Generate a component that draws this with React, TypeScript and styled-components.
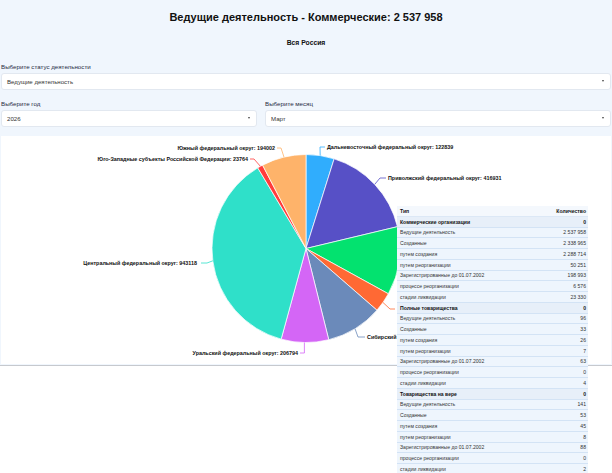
import React from 'react'
import styled, { createGlobalStyle } from 'styled-components'

const GlobalStyle = createGlobalStyle`
  html, body {
    margin: 0;
    padding: 0;
    background: #ffffff;
    font-family: "Liberation Sans", Arial, sans-serif;
  }
`

type Slice = {
  name: string
  value: number
  color: string
  line: [number, number][]
  tx: number
  ty: number
  anchor: 'start' | 'end'
  hidden?: boolean
}

// page coordinates, the chart group is shifted back into the card
const slices: Slice[] = [
  { name: 'Дальневосточный федеральный округ', value: 122839, color: '#30adfd', line: [[320.2, 157], [320, 148.5], [325, 148.5]], tx: 327, ty: 148.5, anchor: 'start' },
  { name: 'Приволжский федеральный округ', value: 416931, color: '#5750c6', line: [[374.7, 185.9], [380, 179.5], [386, 179.5]], tx: 388, ty: 179.5, anchor: 'start' },
  { name: 'Северо-Западный федеральный округ', value: 297800, color: '#03e26f', line: [[399.2, 262.5], [403, 262.5], [407, 262.5]], tx: 409, ty: 262.5, anchor: 'start', hidden: true },
  { name: 'Северо-Кавказский федеральный округ', value: 86000, color: '#ff6934', line: [[383, 304], [390, 310.5], [395, 310.5]], tx: 397, ty: 310.5, anchor: 'start', hidden: true },
  { name: 'Сибирский федеральный округ', value: 246710, color: '#6b8aba', line: [[355, 330.2], [358, 338.5], [365, 338.5]], tx: 367, ty: 338.5, anchor: 'start' },
  { name: 'Уральский федеральный округ', value: 206794, color: '#d466f6', line: [[304.4, 344], [304.4, 354.5], [300, 354.5]], tx: 298, ty: 354.5, anchor: 'end' },
  { name: 'Центральный федеральный округ', value: 943118, color: '#2fe0c9', line: [[212.8, 262.3], [207, 264.5], [201, 264.5]], tx: 197, ty: 264.5, anchor: 'end' },
  { name: 'Юго-Западные субъекты Российской Федерации', value: 23764, color: '#ff3c3c', line: [[260.4, 167.8], [254, 160.5], [250, 160.5]], tx: 248, ty: 160.5, anchor: 'end' },
  { name: 'Южный федеральный округ', value: 194002, color: '#feb36a', line: [[284, 158.6], [281, 149.5], [277, 149.5]], tx: 275, ty: 149.5, anchor: 'end' },
]

type Row = { label: string; value: string; group?: boolean }

const group = (title: string, v: string[]): Row[] => [
  { label: title, value: '0', group: true },
  { label: 'Ведущие деятельность', value: v[0] },
  { label: 'Созданные', value: v[1] },
  { label: 'путем создания', value: v[2] },
  { label: 'путем реорганизации', value: v[3] },
  { label: 'Зарегистрированные до 01.07.2002', value: v[4] },
  { label: 'процессе реорганизации', value: v[5] },
  { label: 'стадии ликвидации', value: v[6] },
]

const rows: Row[] = [
  ...group('Коммерческие организации', ['2 537 958', '2 338 965', '2 288 714', '50 251', '198 993', '6 576', '23 330']),
  ...group('Полные товарищества', ['96', '33', '26', '7', '63', '0', '4']),
  ...group('Товарищества на вере', ['141', '53', '45', '8', '88', '0', '2']),
]

const Screen = styled.div`
  min-height: 473px;
  background: #ffffff;
`

const Page = styled.div`
  background: #f0f6fd;
  padding: 0 1px 1.5px;
`

const Title = styled.h1`
  margin: 0;
  height: 34px;
  line-height: 34px;
  text-align: center;
  font-size: 11px;
  font-weight: 700;
  color: #111;
`

const Subtitle = styled.h3`
  margin: 0;
  height: 18px;
  line-height: 18px;
  text-align: center;
  font-size: 6.8px;
  font-weight: 700;
  color: #111;
`

const Field = styled.div<{ $top: number }>`
  margin-top: ${({ $top }) => $top}px;
`

const Label = styled.div`
  height: 10px;
  line-height: 10px;
  font-size: 6.2px;
  color: #1f2a44;
  margin-bottom: 0.5px;
`

const Select = styled.div`
  height: 17.5px;
  box-sizing: border-box;
  background: #fff;
  border: 1px solid #e2e8f0;
  border-radius: 3px;
  display: flex;
  align-items: center;
  justify-content: space-between;
  padding: 0 6px 0 5px;
  font-size: 6.1px;
  color: #333;
`

const Caret = styled.span`
  width: 0;
  height: 0;
  border-left: 1.6px solid transparent;
  border-right: 1.6px solid transparent;
  border-top: 2px solid #444;
`

const TwoCols = styled.div`
  display: grid;
  grid-template-columns: 256px 1fr;
  column-gap: 8px;
  margin-top: 9px;
`

const Card = styled.div`
  position: relative;
  margin-top: 8.5px;
  height: 228px;
  background: #ffffff;
`

const ChartSvg = styled.svg`
  display: block;
`

const PieLabel = styled.text`
  font-family: "Liberation Sans", Arial, sans-serif;
  font-size: 5.4px;
  font-weight: 700;
  fill: #111;
`

const Table = styled.table`
  position: absolute;
  left: 396px;
  top: 70px;
  width: 191px;
  border-collapse: collapse;
  font-size: 5.1px;
  color: #2b2b2b;
  z-index: 2;
`

const Cell = styled.td<{ $right?: boolean; $bold?: boolean }>`
  height: 10.75px;
  box-sizing: border-box;
  padding: 0 2px 0 3px;
  text-align: ${({ $right }) => ($right ? 'right' : 'left')};
  font-weight: ${({ $bold }) => ($bold ? 700 : 400)};
  white-space: nowrap;
`

const HeadRow = styled.tr`
  background: #f4f8fd;
  border-bottom: 1px solid #dce8f6;
  color: #111;
`

const BodyRow = styled.tr<{ $group?: boolean }>`
  background: ${({ $group }) => ($group ? '#e7eff9' : '#eef5fd')};
  border-bottom: 1px solid #d3e3f5;
  color: ${({ $group }) => ($group ? '#111' : '#333')};
`

const Rule = styled.div`
  height: 1px;
  background: #c6c9ce;
`

const Dropdown = ({ value }: { value: string }) => (
  <Select>
    <span>{value}</span>
    <Caret />
  </Select>
)

const Pie = () => {
  const cx = 306
  const cy = 250
  const r = 94
  const total = slices.reduce((s, x) => s + x.value, 0)
  let acc = 0
  const pt = (a: number) => [cx + r * Math.sin(a), cy - r * Math.cos(a)]
  return (
    <ChartSvg width={610} height={228} viewBox="0 0 610 228">
      <g transform="translate(-1,-137.5)">
        {slices.map((s) => {
          const a0 = (acc / total) * Math.PI * 2
          acc += s.value
          const a1 = (acc / total) * Math.PI * 2
          const [x0, y0] = pt(a0)
          const [x1, y1] = pt(a1)
          const large = a1 - a0 > Math.PI ? 1 : 0
          return (
            <path
              key={s.name}
              d={`M${cx},${cy} L${x0},${y0} A${r},${r} 0 ${large} 1 ${x1},${y1} Z`}
              fill={s.color}
              stroke="#fff"
              strokeWidth={0.7}
            />
          )
        })}
        {slices.map((s) => (
          <g key={`l-${s.name}`}>
            <polyline points={s.line.map((p) => p.join(',')).join(' ')} fill="none" stroke={s.color} strokeWidth={0.8} />
            {/* labels that sit fully under the table are not drawn */}
            {!s.hidden && (
              <PieLabel x={s.tx} y={s.ty} textAnchor={s.anchor} dominantBaseline="central">
                {`${s.name}: ${s.value}`}
              </PieLabel>
            )}
          </g>
        ))}
      </g>
    </ChartSvg>
  )
}

export default function App() {
  return (
    <Screen>
      <GlobalStyle />
      <Page>
        <Title>Ведущие деятельность - Коммерческие: 2 537 958</Title>
        <Subtitle>Вся Россия</Subtitle>
        <Field $top={10}>
          <Label>Выберите статус деятельности</Label>
          <Dropdown value="Ведущие деятельность" />
        </Field>
        <TwoCols>
          <div>
            <Label>Выберите год</Label>
            <Dropdown value="2026" />
          </div>
          <div>
            <Label>Выберите месяц</Label>
            <Dropdown value="Март" />
          </div>
        </TwoCols>
        <Card>
          <Pie />
          <Table>
            <thead>
              <HeadRow>
                <Cell $bold>Тип</Cell>
                <Cell $bold $right>
                  Количество
                </Cell>
              </HeadRow>
            </thead>
            <tbody>
              {rows.map((row, i) => (
                <BodyRow key={i} $group={row.group}>
                  <Cell $bold={row.group}>{row.label}</Cell>
                  <Cell $bold={row.group} $right>
                    {row.value}
                  </Cell>
                </BodyRow>
              ))}
            </tbody>
          </Table>
        </Card>
      </Page>
      <Rule />
    </Screen>
  )
}
